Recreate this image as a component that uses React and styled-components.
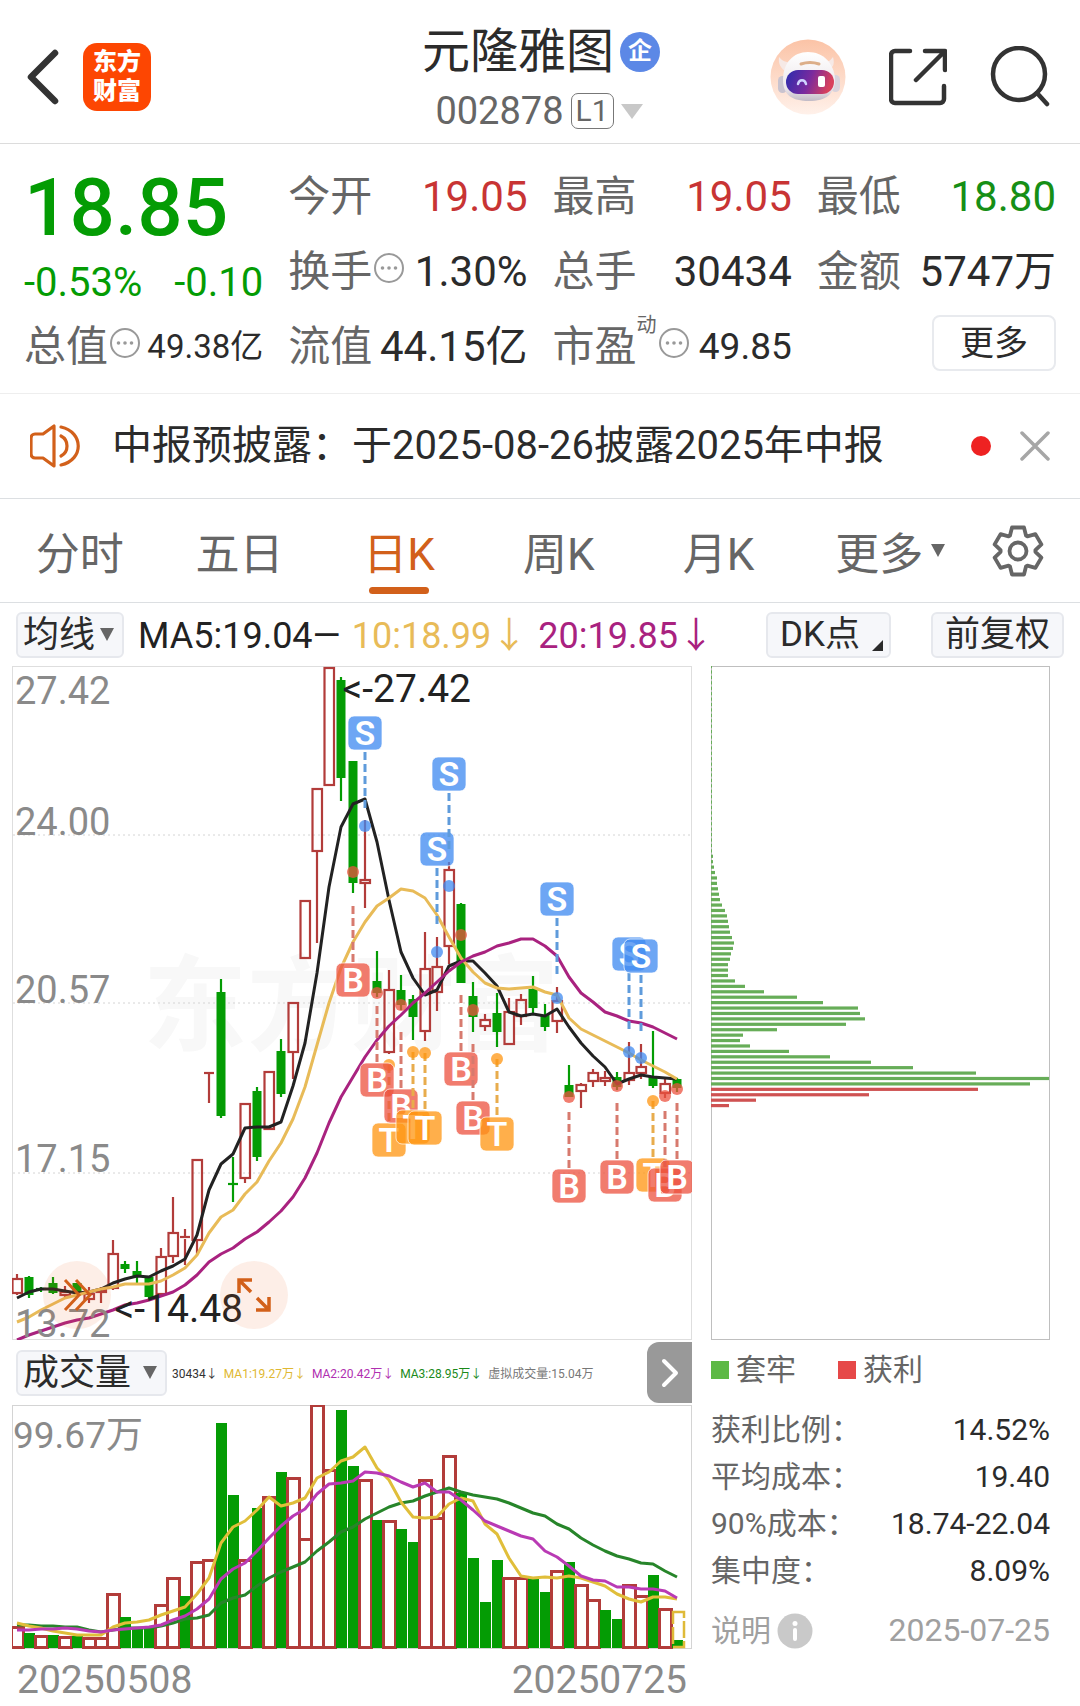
import React from 'react';
import styled, { createGlobalStyle } from 'styled-components';

const GlobalStyle = createGlobalStyle`
	* {
		box-sizing: border-box;
	}
	body {
		margin: 0;
		background: #fff;
		color: #2b2b2b;
		font-family: Roboto, 'Noto Sans CJK SC', sans-serif;
	}
	button, select {
		margin: 0;
		padding: 0;
		border: 0;
		background: none;
		color: inherit;
		font: inherit;
		white-space: nowrap;
		cursor: pointer;
	}
	svg {
		display: block;
	}
	svg text {
		font-family: Roboto, 'Noto Sans CJK SC', sans-serif;
	}
`;

const GREEN = '#049c04';
const RED = '#b23c3a';
const ORANGE = '#d2601a';

/* ---------- header ---------- */

const Header = styled.header`
	display: grid;
	grid-template-columns: 1fr auto 1fr;
	align-items: center;
	padding: 22px 30px 12px 24px;
	border-bottom: 1px solid #dcdcdc;
`;

const HeaderLeft = styled.div`
	display: flex;
	align-items: center;
	gap: 19px;
`;

const HeaderRight = styled.div`
	display: flex;
	align-items: center;
	justify-content: flex-end;
	gap: 43px;
`;

const Logo = styled.a`
	width: 68px;
	height: 68px;
	padding: 5px 0;
	border-radius: 14px;
	background: #fd4602;
	color: #fff;
	font-size: 24px;
	font-weight: 900;
	line-height: 29px;
	text-align: center;
	text-decoration: none;
`;

const TitleBlock = styled.div`
	display: flex;
	flex-direction: column;
	align-items: center;
	gap: 12px;
	padding: 3px 0 0 8px;
`;

const TitleRow = styled.div`
	display: flex;
	align-items: center;
	gap: 6px;
	height: 54px;
`;

const Title = styled.h1`
	margin: 0;
	font-size: 48px;
	font-weight: 400;
	line-height: 54px;
`;

const CompanyBadge = styled.span`
	width: 40px;
	height: 40px;
	border-radius: 50%;
	background: #5c88e6;
	color: #fff;
	font-size: 24px;
	font-weight: 700;
	line-height: 38px;
	text-align: center;
`;

const CodeButton = styled.button`
	display: flex;
	align-items: center;
	gap: 7px;
	height: 40px;
	padding-right: 4px;
	color: #666;
	font-size: 38px;
	line-height: 40px;
`;

const Level = styled.span`
	height: 36px;
	padding: 0 4px;
	border: 1px solid #777;
	border-radius: 7px;
	font-size: 30px;
	line-height: 34px;
`;

const Caret = styled.span`
	display: inline-block;
	border-left: ${(props) => props.$size}px solid transparent;
	border-right: ${(props) => props.$size}px solid transparent;
	border-top: ${(props) => props.$drop}px solid ${(props) => props.$color || '#666'};
`;

/* ---------- quote ---------- */

const Quote = styled.section`
	display: grid;
	grid-template-columns: repeat(4, 1fr);
	grid-template-rows: repeat(3, 75px);
	column-gap: 25px;
	padding: 15px 24px 9px;
	border-bottom: 1px solid #eee;
`;

const PriceCell = styled.div`
	grid-row: span 2;
	color: ${GREEN};
`;

const Price = styled.div`
	font-size: 80px;
	font-weight: 500;
	line-height: 98px;
`;

const Change = styled.div`
	display: flex;
	justify-content: space-between;
	font-size: 40px;
	line-height: 52px;
`;

const Cell = styled.div`
	display: flex;
	align-items: center;
	min-width: 0;
	white-space: nowrap;
	line-height: 73px;
`;

const CellLabel = styled.span`
	color: #666;
	font-size: 42px;
`;

const CellTag = styled.sup`
	align-self: flex-start;
	color: #666;
	font-size: 20px;
	line-height: 32px;
`;

const CellValue = styled.span`
	margin-left: auto;
	color: ${(props) => props.$color || '#2b2b2b'};
	font-size: ${(props) => props.$size || 42}px;
`;

const MoreButton = styled.button`
	width: 124px;
	height: 56px;
	margin: 0 0 8px auto;
	border: 2px solid #e8eaee;
	border-radius: 8px;
	font-size: 34px;
	line-height: 48px;
`;

const DotsButton = styled.button`
	flex: none;
	margin: 0 2px 8px;
`;

/* ---------- notice ---------- */

const Notice = styled.section`
	display: flex;
	align-items: center;
	height: 105px;
	padding: 0 30px;
	border-bottom: 1px solid #dcdfe2;
`;

const NoticeText = styled.a`
	flex: 1;
	margin-left: 32px;
	color: inherit;
	font-size: 40px;
	line-height: 48px;
	text-decoration: none;
	white-space: nowrap;
`;

const UnreadDot = styled.span`
	width: 20px;
	height: 20px;
	margin-right: 29px;
	border-radius: 50%;
	background: #ee2222;
`;

/* ---------- tabs ---------- */

const TabBar = styled.nav`
	display: grid;
	grid-template-columns: repeat(6, minmax(0, 1fr)) 86px;
	height: 104px;
	padding-right: 36px;
	border-bottom: 1px solid #dcdfe2;
`;

const Tab = styled.button`
	display: flex;
	align-items: center;
	justify-content: center;
	gap: 8px;
	position: relative;
	padding-left: ${(props) => (props.$menu ? 24 : 0)}px;
	color: ${(props) => (props.$active ? ORANGE : '#666')};
	font-size: 44px;

	&::after {
		content: '';
		display: ${(props) => (props.$active ? 'block' : 'none')};
		position: absolute;
		bottom: 8px;
		width: 60px;
		height: 7px;
		border-radius: 4px;
		background: ${ORANGE};
	}
`;

const SettingsButton = styled.button`
	justify-self: end;
`;

/* ---------- chart controls ---------- */

const Controls = styled.div`
	display: flex;
	align-items: center;
	height: 63px;
	padding: 0 16px;
	font-size: 36px;
	white-space: nowrap;
`;

const SelectBox = styled.label`
	display: inline-flex;
	align-items: center;
	position: relative;
	flex: none;
	width: ${(props) => props.$width}px;
	height: 46px;
	border: 2px solid #e6e8ed;
	border-radius: 6px;
	background: #f6f7fa;

	select {
		width: 100%;
		height: 42px;
		padding-left: 5px;
		appearance: none;
		font-size: 36px;
		line-height: 42px;
	}
	${Caret} {
		position: absolute;
		right: 8px;
		pointer-events: none;
	}
`;

const Averages = styled.div`
	display: flex;
	align-items: baseline;
	flex: 1;
	gap: 11px;
	padding-bottom: 6px;
	margin-left: 14px;
`;

const Average = styled.span`
	color: ${(props) => props.$color};
`;

const PillButton = styled.button`
	display: flex;
	align-items: center;
	justify-content: center;
	height: 46px;
	padding: 0 12px;
	margin-left: ${(props) => props.$gap || 0}px;
	border: 2px solid #e6e8ed;
	border-radius: 6px;
	background: #f6f7fa;
	font-size: 35px;
	line-height: 42px;
`;

const Corner = styled.i`
	align-self: flex-end;
	margin: 0 -6px 5px 12px;
	border-bottom: 11px solid #2b2b2b;
	border-left: 11px solid transparent;
`;

/* ---------- charts ---------- */

const Board = styled.main`
	display: grid;
	grid-template-columns: minmax(0, 680fr) minmax(0, 339fr);
	column-gap: 19px;
	padding: 0 30px 0 12px;
`;

const ChartBox = styled.div`
	position: relative;

	svg {
		width: 100%;
	}
`;

const RoundButton = styled.button`
	display: flex;
	align-items: center;
	justify-content: center;
	position: absolute;
	bottom: 11px;
	left: ${(props) => props.$left};
	width: 68px;
	height: 68px;
	border-radius: 50%;
	background: rgba(240, 100, 40, 0.11);

	svg {
		width: auto;
	}
`;

const VolumeBar = styled.div`
	display: flex;
	align-items: center;
	height: 65px;
	padding-left: 4px;
	white-space: nowrap;
`;

const VolumeAverages = styled.div`
	display: flex;
	align-items: baseline;
	flex: 1;
	gap: 6px;
	min-width: 0;
	margin-left: 5px;
	font-size: 12px;
`;

const NextButton = styled.button`
	display: flex;
	align-items: center;
	justify-content: center;
	flex: none;
	width: 45px;
	height: 61px;
	border-radius: 12px 0 0 12px;
	background: #999;
`;

const Dates = styled.div`
	display: flex;
	justify-content: space-between;
	padding: 5px 5px 0;
	color: #8a8a8a;
	font-size: 39px;
	line-height: 52px;
`;

/* ---------- cost side panel ---------- */

const Legend = styled.div`
	display: flex;
	gap: 42px;
	height: 60px;
	color: #666;
	font-size: 30px;
	line-height: 60px;
`;

const LegendItem = styled.span`
	display: flex;
	align-items: center;
	gap: 7px;

	&::before {
		content: '';
		width: 18px;
		height: 18px;
		background: ${(props) => props.$color};
	}
`;

const CostTable = styled.table`
	width: 100%;
	margin-top: 6px;
	border-collapse: collapse;
	font-size: 30px;
	line-height: 47px;

	th, td {
		padding: 0;
		font-weight: 400;
		white-space: nowrap;
	}
	th {
		color: #666;
		text-align: left;
	}
	td {
		text-align: right;
	}
`;

const CostFooter = styled.div`
	display: flex;
	align-items: center;
	justify-content: space-between;
	margin-top: 13px;
	color: #a0a0a0;
	font-size: 32px;
	line-height: 47px;
`;

const HelpButton = styled.button`
	display: flex;
	align-items: center;
	gap: 6px;
	font-size: 30px;
`;

/* ---------- data ---------- */

const STEP = 12;
const xAt = (i) => 5 + i * STEP;

// [high, body top, body bottom, low, rising]
const candles = [
	[608, 612, 628, 629, 1], [610, 611, 629, 632, 0], [621, 623, 624, 626, 0], [611, 617, 627, 628, 0],
	[620, 625, 630, 631, 1], [617, 617, 626, 628, 0], [621, 627, 634, 637, 1], [621, 623, 627, 637, 1],
	[574, 587, 623, 624, 1], [595, 598, 603, 607, 0], [595, 605, 610, 617, 0], [610, 611, 631, 634, 0],
	[582, 590, 629, 630, 1], [531, 566, 591, 597, 1], [563, 571, 573, 599, 1], [493, 493, 575, 589, 1],
	[407, 407, 408, 437, 1], [313, 326, 450, 452, 0], [491, 518, 519, 536, 0], [437, 437, 513, 517, 1],
	[421, 425, 491, 495, 0], [405, 405, 464, 464, 1], [373, 385, 428, 431, 0], [336, 336, 387, 413, 1],
	[234, 234, 293, 293, 1], [122, 122, 186, 277, 1], [1, 1, 120, 120, 1], [11, 14, 112, 135, 0],
	[95, 95, 217, 227, 0], [154, 213, 218, 242, 1], [285, 315, 327, 331, 0], [304, 323, 387, 388, 1],
	[309, 324, 339, 344, 0], [329, 333, 351, 374, 0], [266, 302, 366, 375, 1], [271, 300, 327, 345, 1],
	[196, 203, 281, 298, 1], [237, 238, 317, 317, 0], [316, 330, 351, 366, 0], [348, 353, 361, 365, 1],
	[327, 347, 366, 381, 0], [332, 345, 379, 379, 1], [328, 333, 351, 359, 1], [310, 323, 342, 347, 0],
	[338, 349, 361, 365, 0], [321, 334, 356, 367, 1], [399, 419, 431, 431, 0], [417, 418, 426, 442, 1],
	[403, 406, 416, 421, 1], [405, 411, 416, 420, 1], [406, 411, 421, 424, 0], [376, 406, 415, 419, 1],
	[378, 400, 408, 413, 1], [365, 411, 420, 422, 0], [411, 417, 428, 432, 1], [412, 413, 422, 426, 0],
];

const priceLines = [
	{
		color: '#222',
		ys: [632, 626, 623, 623, 625, 627, 626, 623, 617, 613, 610, 611, 605, 600, 593, 569, 524, 498, 488, 462, 461, 461, 456, 420, 377, 307, 221, 161, 138, 133, 176, 234, 286, 312, 329, 324, 300, 295, 295, 307, 320, 346, 350, 348, 350, 343, 361, 377, 390, 401, 418, 413, 409, 411, 412, 413],
	},
	{
		color: '#e8bb58',
		ys: [656, 651, 644, 638, 632, 629, 626, 623, 621, 618, 618, 618, 615, 609, 602, 589, 567, 551, 544, 528, 516, 495, 477, 453, 421, 379, 337, 302, 276, 256, 240, 232, 223, 225, 232, 249, 271, 292, 306, 317, 322, 323, 322, 321, 326, 329, 352, 363, 369, 375, 381, 387, 394, 400, 406, 413],
	},
	{
		color: '#a9227f',
		ys: [674, 669, 665, 661, 657, 654, 652, 648, 644, 639, 637, 634, 630, 626, 619, 609, 596, 588, 582, 573, 566, 556, 545, 531, 512, 487, 457, 431, 411, 391, 374, 360, 349, 337, 327, 316, 305, 296, 290, 286, 280, 277, 273, 273, 280, 290, 311, 327, 336, 346, 350, 355, 357, 361, 367, 373],
	},
];

// candle index, kind, badge centre, dot
const signals = [
	[28, 'B', 314, 206], [29, 'S', 67, 160], [31, 'T', 474, 399], [30, 'B', 414, 327],
	[32, 'B', 440, 339], [33, 'T', 461, 386], [34, 'T', 462, 387], [35, 'S', 183, 286],
	[36, 'S', 108, 220], [37, 'B', 403, 269], [38, 'B', 452, 344], [40, 'T', 468, 393],
	[45, 'S', 233, 332], [46, 'B', 520, 431], [50, 'B', 511, 420], [51, 'S', 288, 386],
	[52, 'S', 290, 392], [53, 'T', 509, 435], [54, 'B', 519, 430], [55, 'B', 511, 423],
];

const signalStyle = {
	S: { fill: '#3f8af0', line: '#5f9bdb' },
	B: { fill: '#ec5340', line: '#d77a6e' },
	T: { fill: '#ff9612', line: '#e8ac4c' },
};

const volumes = [
	221, 228, 230, 230, 231, 231, 232, 232, 188, 212, 223, 223, 199, 172, 191, 156, 154, 18, 90, 154, 103, 91, 67, 72, 133, -1, 64, 5, 61, 74, 115, 115, 124, 137, 74, 112, 50, 88, 153, 197, 155, 172, 172, 172, 187, 165, 157, 179, 194, 205, 214, 179, 190, 170, 203, 235,
];

// days drawn as solid green volume bars
const greenVolumes = [1, 3, 5, 9, 10, 11, 14, 17, 18, 20, 22, 27, 28, 30, 32, 33, 37, 38, 39, 40, 43, 44, 46, 49, 50, 53, 55];

const volumeLines = [
	{
		color: '#27852a',
		ys: [220, 220, 221, 221, 222, 222, 225, 227, 225, 223, 223, 223, 221, 218, 214, 213, 210, 198, 193, 190, 181, 173, 167, 162, 157, 146, 137, 127, 122, 114, 108, 102, 98, 96, 91, 87, 83, 87, 90, 92, 94, 98, 103, 108, 111, 119, 124, 133, 140, 146, 151, 154, 158, 159, 166, 172],
	},
	{
		color: '#e0be3a',
		ys: [218, 221, 223, 226, 228, 230, 230, 230, 222, 218, 217, 215, 210, 206, 202, 189, 173, 138, 122, 116, 105, 92, 101, 98, 93, 73, 67, 56, 52, 42, 63, 75, 97, 112, 113, 112, 99, 93, 96, 119, 129, 153, 171, 173, 172, 173, 171, 173, 177, 181, 189, 194, 197, 192, 192, 194],
	},
	{
		color: '#b93ab4',
		ys: [225, 225, 224, 224, 223, 224, 226, 227, 225, 224, 223, 222, 220, 215, 211, 204, 194, 174, 164, 158, 146, 133, 121, 111, 104, 89, 79, 78, 76, 67, 68, 71, 77, 82, 78, 87, 87, 95, 105, 116, 121, 126, 131, 134, 146, 152, 161, 171, 175, 176, 182, 182, 184, 184, 186, 193],
	},
];

const costs = [
	...Array(35).fill(1),
	2, 2, 3, 4, 6, 6, 7, 8, 9, 11, 14, 16, 17, 18, 19, 21, 23, 22, 20, 19, 17, 17, 17, 24, 34, 53, 86, 112, 147, 149, 154, 135, 66, 32, 29, 39, 78, 119, 160, 202, 265, 338, 319, 267, 158, 45, 18,
];
const PROFIT_FROM = costs.length - 4;

const priceTicks = [
	{ label: '27.42', base: 38 },
	{ label: '24.00', base: 169, line: 169 },
	{ label: '20.57', base: 337, line: 337 },
	{ label: '17.15', base: 506, line: 507 },
	{ label: '13.72', base: 671 },
];

const costRows = [
	['获利比例：', '14.52%'],
	['平均成本：', '19.40'],
	['90%成本：', '18.74-22.04'],
	['集中度：', '8.09%'],
];

const toPoints = (ys) => ys.map((y, i) => `${xAt(i)},${y}`).join(' ');

/* ---------- icons ---------- */

const DotsIcon = () => (
	<svg width='30' height='30' viewBox='0 0 30 30' fill='none' stroke='#999' strokeWidth='2'>
		<circle cx='15' cy='15' r='14' />
		<g fill='#999' stroke='none'>
			<circle cx='8.5' cy='15' r='1.8' />
			<circle cx='15' cy='15' r='1.8' />
			<circle cx='21.5' cy='15' r='1.8' />
		</g>
	</svg>
);

const Assistant = () => (
	<svg width='76' height='76' viewBox='0 0 76 76'>
		<defs>
			<linearGradient id='halo' x1='0' y1='0' x2='0' y2='1'>
				<stop offset='0' stopColor='#fbc3a6' />
				<stop offset='1' stopColor='#fff1ea' />
			</linearGradient>
			<linearGradient id='visor' x1='0' y1='0' x2='1' y2='0.2'>
				<stop offset='0' stopColor='#2a2cae' />
				<stop offset='0.55' stopColor='#7a2a9e' />
				<stop offset='1' stopColor='#d8405c' />
			</linearGradient>
			<linearGradient id='shell' x1='0' y1='0' x2='0' y2='1'>
				<stop offset='0' stopColor='#fff' />
				<stop offset='0.75' stopColor='#ece6ea' />
				<stop offset='1' stopColor='#c2bbc6' />
			</linearGradient>
		</defs>
		<circle cx='38' cy='38' r='37.5' fill='url(#halo)' />
		<path d='M17 29c-6-3-9-8-8-15 3 4 7 5 13 6zM58 27c5-2 7-6 5-13-3 4-5 5-10 7z' transform='translate(0 4)' fill='#f6e9e6' />
		<rect x='8' y='37' width='9' height='17' rx='4.5' fill='#c9c3cf' />
		<rect x='61' y='36' width='9' height='17' rx='4.5' fill='#d9d3dc' />
		<path d='M38 13c15 0 26 11 27 27 0 15-9 22-26 22S13 56 13 41c0-17 10-28 25-28z' fill='url(#shell)' />
		<path d='M31 25q9-3 18 0' fill='none' stroke='#dcae88' strokeWidth='3' strokeLinecap='round' />
		<rect x='16' y='31' width='48' height='24' rx='12' fill='url(#visor)' />
		<path d='M28 45c1-5 7-5 8 0' fill='none' stroke='#cfd3ff' strokeWidth='2.5' strokeLinecap='round' />
		<rect x='48' y='37' width='7' height='11' rx='2' fill='#fff' />
	</svg>
);

const ShareIcon = () => (
	<svg width='58' height='58' viewBox='0 0 58 58' fill='none' stroke='#333' strokeWidth='4.5' strokeLinecap='round' strokeLinejoin='round'>
		<path d='M21 3H6a4 4 0 0 0-4 4v44a4 4 0 0 0 4 4h45a4 4 0 0 0 4-4V38' />
		<path d='M36 3h20v19M54 5 27 32' />
	</svg>
);

const SearchIcon = () => (
	<svg width='60' height='62' viewBox='0 0 60 62' fill='none' stroke='#333' strokeWidth='4.5' strokeLinecap='round'>
		<circle cx='29' cy='28' r='26' />
		<path d='m47 47 10 11' />
	</svg>
);

const SpeakerIcon = () => (
	<svg width='50' height='44' viewBox='0 0 50 44' fill='none' stroke={ORANGE} strokeWidth='3.2' strokeLinecap='round' strokeLinejoin='round'>
		<path d='M24 2v40L13 34H5a4 4 0 0 1-4-4V14a4 4 0 0 1 4-4h8z' />
		<path d='M31 12c8 4 8 16 0 20M31 3c23 5 23 33 0 38' />
	</svg>
);

const gearPath = [0, 60, 120, 180, 240, 300]
	.map((deg) => {
		const a = (deg * Math.PI) / 180;
		return [[-8, -15.5], [-6, -23.5], [6, -23.5], [8, -15.5]]
			.map(([x, y]) => `${(x * Math.cos(a) - y * Math.sin(a)).toFixed(1)},${(x * Math.sin(a) + y * Math.cos(a)).toFixed(1)}`)
			.join(' ');
	})
	.join(' ');

const GearIcon = () => (
	<svg width='52' height='52' viewBox='-26 -26 52 52' fill='none' stroke='#666' strokeWidth='3.8' strokeLinejoin='round'>
		<polygon points={gearPath} />
		<circle r='8.5' />
	</svg>
);

/* ---------- drawings ---------- */

const Candle = ({ index, data }) => {
	const [high, top, bottom, low, rising] = data;
	const x = xAt(index);
	const color = rising ? RED : GREEN;
	const height = bottom - top;
	return (
		<g stroke={color} strokeWidth='2.2'>
			{high < top && <line x1={x} x2={x} y1={high} y2={top} />}
			{low > bottom && <line x1={x} x2={x} y1={bottom} y2={low} />}
			{height < 3 && <line x1={x - 5} x2={x + 5} y1={top} y2={top} />}
			{height >= 3 && rising === 1 && <rect x={x - 4.5} y={top + 1} width='9.5' height={Math.max(height - 2, 1)} fill='none' />}
			{height >= 3 && rising === 0 && <rect x={x - 4.5} y={top} width='9' height={height} fill={color} stroke='none' />}
		</g>
	);
};

const Signal = ({ index, kind, badge, dot }) => {
	const x = xAt(index);
	const { fill, line } = signalStyle[kind];
	const start = kind === 'S' ? badge + 19 : kind === 'T' ? dot : badge - 74;
	const end = kind === 'S' ? badge + 76 : badge - 18;
	return (
		<g>
			<line x1={x} x2={x} y1={start} y2={end} stroke={line} strokeWidth='3' strokeDasharray='8 4' />
			<circle cx={x} cy={dot} r='6' fill={fill} fillOpacity='0.75' />
			<rect x={x - 17} y={badge - 17} width='34' height='34' rx='6' fill={fill} fillOpacity='0.76' stroke='#fff' strokeOpacity='0.7' />
			<text x={x} y={badge + 12} fill='#fff' fontSize='34' fontWeight='600' textAnchor='middle'>{kind}</text>
		</g>
	);
};

const KLineChart = () => (
	<svg viewBox='0 0 680 674' role='img' aria-label='日K线'>
		<rect x='0.5' y='0.5' width='679' height='673' fill='#fff' stroke='#dedede' />
		<text x='131' y='377' fontSize='104' fontWeight='700' fill='#f8f8f8'>东方财富</text>
		{priceTicks.filter((tick) => tick.line).map((tick) => (
			<line key={tick.label} x1='1' x2='679' y1={tick.line} y2={tick.line} stroke='#d4d4d4' strokeDasharray='2 3' />
		))}
		{candles.map((data, i) => <Candle key={i} index={i} data={data} />)}
		{priceLines.map((line) => (
			<polyline key={line.color} points={toPoints(line.ys)} fill='none' stroke={line.color} strokeWidth='3' strokeLinejoin='round' />
		))}
		{signals.map(([index, kind, badge, dot]) => (
			<Signal key={index} index={index} kind={kind} badge={badge} dot={dot} />
		))}
		<g fontSize='38' fill='#8a8a8a'>
			{priceTicks.map((tick) => <text key={tick.label} x='3' y={tick.base}>{tick.label}</text>)}
		</g>
		<g fontSize='39' fill='#222' textAnchor='end'>
			<text x='459' y='36'>&lt;-27.42</text>
			<text x='231' y='656'>&lt;-14.48</text>
		</g>
	</svg>
);

const VolumeChart = () => (
	<svg viewBox='0 0 680 244' role='img' aria-label='成交量'>
		<rect x='0.5' y='0.5' width='679' height='243' fill='#fff' stroke='#d4d4d4' />
		{volumes.map((top, i) => {
			const x = xAt(i);
			return greenVolumes.includes(i) ? (
				<rect key={i} x={x - 5} y={top} width='11' height={243 - top} fill={GREEN} />
			) : (
				<rect key={i} x={x - 5.5} y={top + 1.5} width='12' height={241 - top} fill='#fff' stroke={RED} strokeWidth='3' />
			);
		})}
		<rect x={xAt(55) - 4} y='207' width='11' height='35' fill='none' stroke='#dfba38' strokeWidth='2.5' strokeDasharray='17 3' />
		{volumeLines.map((line) => (
			<polyline key={line.color} points={toPoints(line.ys)} fill='none' stroke={line.color} strokeWidth='3' strokeLinejoin='round' />
		))}
		<text x='1' y='43' fontSize='37' fill='#8a8a8a'>99.67万</text>
	</svg>
);

const CostChart = () => (
	<svg viewBox='0 0 339 674' role='img' aria-label='筹码分布'>
		<rect x='0.5' y='0.5' width='338' height='673' fill='#fff' stroke='#bfbfbf' />
		{costs.map((width, i) => (
			<rect
				key={i}
				x='0'
				y={438 - (costs.length - 1 - i) * 5.42}
				width={width}
				height='3.2'
				fill={i < PROFIT_FROM ? '#67ad58' : '#cf5252'}
			/>
		))}
	</svg>
);

/* ---------- page ---------- */

const Stat = ({ label, tag, info, value, color, size }) => (
	<Cell>
		<CellLabel>{label}</CellLabel>
		{tag && <CellTag>{tag}</CellTag>}
		{info && <DotsButton aria-label={`${label}说明`}><DotsIcon /></DotsButton>}
		<CellValue $color={color} $size={size}>{value}</CellValue>
	</Cell>
);

const App = () => (
	<>
		<GlobalStyle />
		<Header>
			<HeaderLeft>
				<button aria-label='返回'>
					<svg width='40' height='60' viewBox='0 0 40 60' fill='none' stroke='#333' strokeWidth='6.5' strokeLinecap='round' strokeLinejoin='round'>
						<path d='M31 6 7 30l24 24' />
					</svg>
				</button>
				<Logo href='#home'>东方<br />财富</Logo>
			</HeaderLeft>
			<TitleBlock>
				<TitleRow>
					<Title>元隆雅图</Title>
					<CompanyBadge>企</CompanyBadge>
				</TitleRow>
				<CodeButton>
					002878
					<Level>L1</Level>
					<Caret $size={11} $drop={15} $color='#c8c8c8' />
				</CodeButton>
			</TitleBlock>
			<HeaderRight>
				<button aria-label='智能助手'><Assistant /></button>
				<button aria-label='分享'><ShareIcon /></button>
				<button aria-label='搜索'><SearchIcon /></button>
			</HeaderRight>
		</Header>

		<Quote>
			<PriceCell>
				<Price>18.85</Price>
				<Change>
					<span>-0.53%</span>
					<span>-0.10</span>
				</Change>
			</PriceCell>
			<Stat label='今开' value='19.05' color='#c83434' />
			<Stat label='最高' value='19.05' color='#c83434' />
			<Stat label='最低' value='18.80' color='#168f16' />
			<Stat label='换手' info value='1.30%' />
			<Stat label='总手' value='30434' />
			<Stat label='金额' value='5747万' />
			<Stat label='总值' info value='49.38亿' size={33} />
			<Stat label='流值' value='44.15亿' />
			<Stat label='市盈' tag='动' info value='49.85' size={37} />
			<Cell><MoreButton>更多</MoreButton></Cell>
		</Quote>

		<Notice>
			<SpeakerIcon />
			<NoticeText href='#notice'>中报预披露：于2025-08-26披露2025年中报</NoticeText>
			<UnreadDot />
			<button aria-label='关闭'>
				<svg width='30' height='30' viewBox='0 0 30 30' stroke='#a6a6a6' strokeWidth='3.5' strokeLinecap='round'>
					<path d='M2 2l26 26M28 2 2 28' />
				</svg>
			</button>
		</Notice>

		<TabBar>
			<Tab>分时</Tab>
			<Tab>五日</Tab>
			<Tab $active>日K</Tab>
			<Tab>周K</Tab>
			<Tab>月K</Tab>
			<Tab $menu>更多<Caret $size={7} $drop={13} /></Tab>
			<SettingsButton aria-label='设置'><GearIcon /></SettingsButton>
		</TabBar>

		<Controls>
			<SelectBox $width={108}>
				<select aria-label='主图指标' defaultValue='均线'>
					<option>均线</option>
				</select>
				<Caret $size={7} $drop={13} />
			</SelectBox>
			<Averages>
				<Average $color='#222'>MA5:19.04—</Average>
				<Average $color='#e8bb58'>10:18.99↓</Average>
				<Average $color='#a9227f'>20:19.85↓</Average>
			</Averages>
			<PillButton>DK点<Corner /></PillButton>
			<PillButton $gap={40}>前复权</PillButton>
		</Controls>

		<Board>
			<div>
				<ChartBox>
					<KLineChart />
					<RoundButton $left='31px' aria-label='展开'>
						<svg width='30' height='36' viewBox='0 0 30 36' fill='none' stroke={ORANGE} strokeWidth='3'>
							<path d='M3 3l14 15L3 33M14 3l14 15L14 33' />
						</svg>
					</RoundButton>
					<RoundButton $left='208px' aria-label='全屏'>
						<svg width='34' height='34' viewBox='0 0 34 34' fill='none' stroke={ORANGE} strokeWidth='3.5'>
							<path d='M2 15V2h13M2 2l12 12M32 19v13H19M32 32 20 20' />
						</svg>
					</RoundButton>
				</ChartBox>
				<VolumeBar>
					<SelectBox $width={151}>
						<select aria-label='副图指标' defaultValue='成交量'>
							<option>成交量</option>
						</select>
						<Caret $size={7} $drop={13} />
					</SelectBox>
					<VolumeAverages>
						<Average $color='#333'>30434↓</Average>
						<Average $color='#e0b832'>MA1:19.27万↓</Average>
						<Average $color='#b02fb0'>MA2:20.42万↓</Average>
						<Average $color='#1a8a1a'>MA3:28.95万↓</Average>
						<Average $color='#777'>虚拟成交量:15.04万</Average>
					</VolumeAverages>
					<NextButton aria-label='下一个'>
						<svg width='18' height='30' viewBox='0 0 18 30' fill='none' stroke='#fff' strokeWidth='4' strokeLinecap='round' strokeLinejoin='round'>
							<path d='M3 3l12 12L3 27' />
						</svg>
					</NextButton>
				</VolumeBar>
				<ChartBox>
					<VolumeChart />
				</ChartBox>
				<Dates>
					<span>20250508</span>
					<span>20250725</span>
				</Dates>
			</div>
			<aside>
				<ChartBox>
					<CostChart />
				</ChartBox>
				<Legend>
					<LegendItem $color='#5db946'>套牢</LegendItem>
					<LegendItem $color='#e64848'>获利</LegendItem>
				</Legend>
				<CostTable>
					<tbody>
						{costRows.map(([label, value]) => (
							<tr key={label}>
								<th scope='row'>{label}</th>
								<td>{value}</td>
							</tr>
						))}
					</tbody>
				</CostTable>
				<CostFooter>
					<HelpButton>
						说明
						<svg width='36' height='36' viewBox='0 0 36 36'>
							<circle cx='18' cy='18' r='17.5' fill='#c9c9c9' />
							<circle cx='18' cy='10.5' r='2.5' fill='#fff' />
							<rect x='16' y='15' width='4' height='13' rx='2' fill='#fff' />
						</svg>
					</HelpButton>
					<time dateTime='2025-07-25'>2025-07-25</time>
				</CostFooter>
			</aside>
		</Board>
	</>
);

export default App;
